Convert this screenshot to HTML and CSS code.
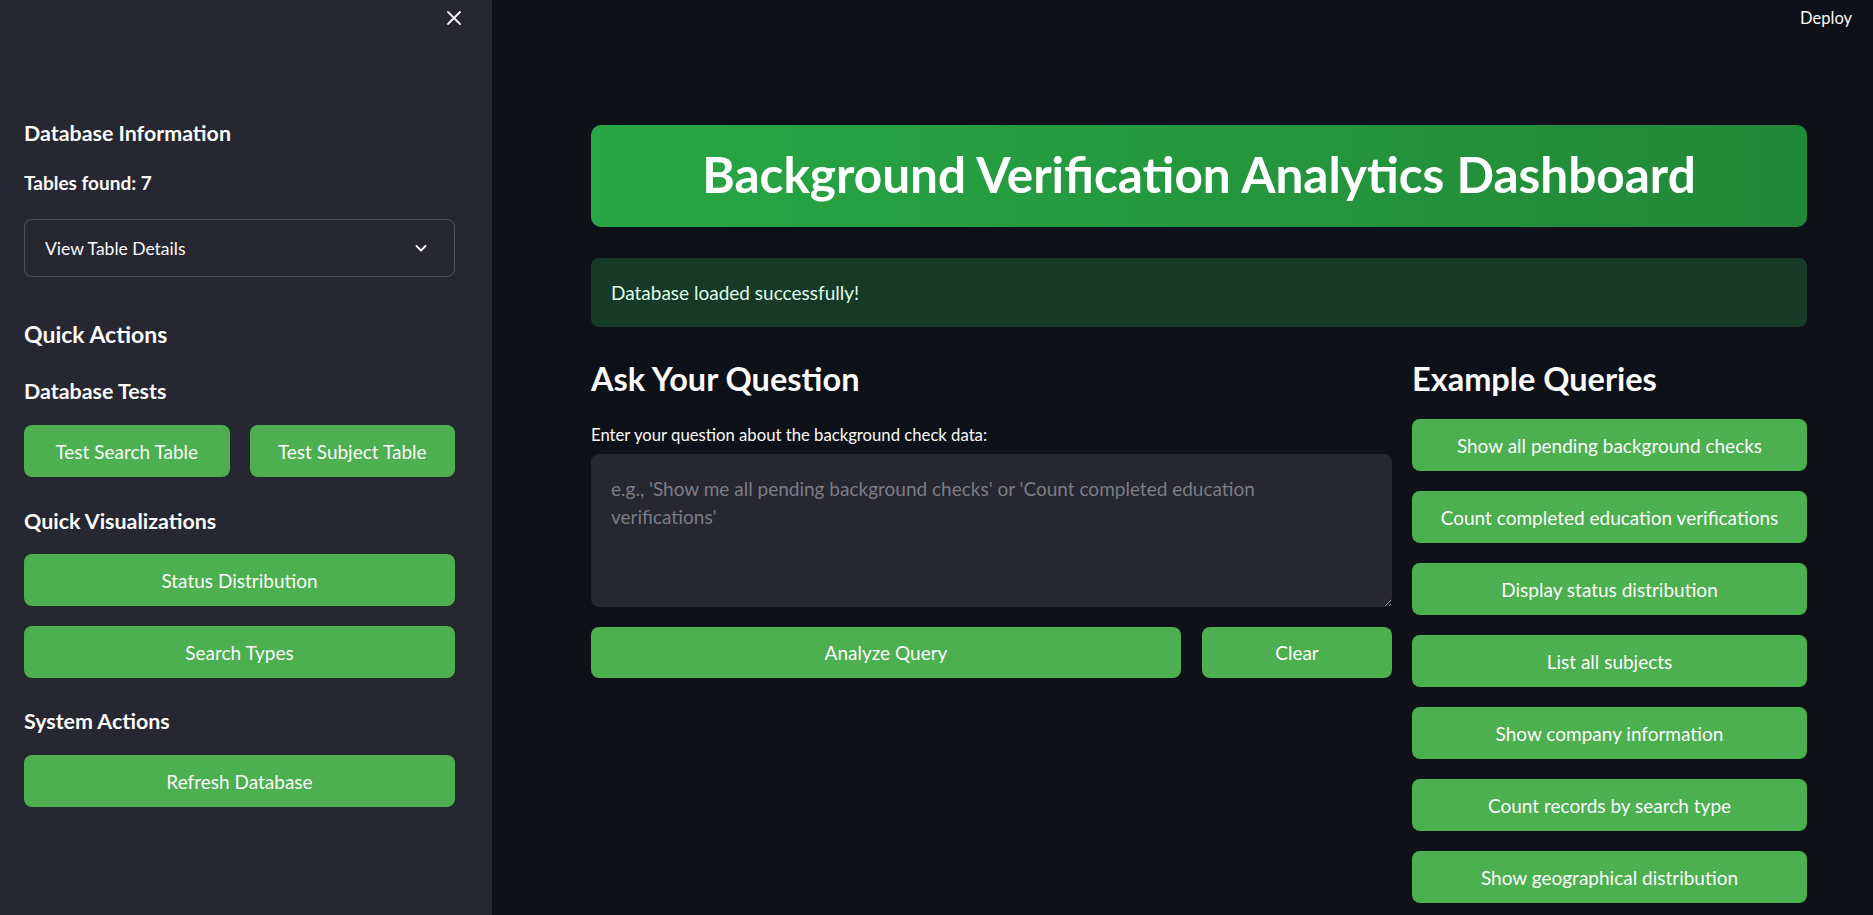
FILE: index.html
```html
<!DOCTYPE html>
<html lang="en">
<head>
<meta charset="utf-8">
<title>Background Verification Analytics Dashboard</title>
<link rel="stylesheet" href="styles.css">
</head>
<body>
<aside class="sidebar">
  <div class="sb-top">
    <svg class="close-icon" viewBox="0 0 16 16" width="16" height="16"><path d="M2 2 L14 14 M14 2 L2 14" stroke="#fafafa" stroke-width="1.8" fill="none" stroke-linecap="round"/></svg>
  </div>
  <h3 class="sb-h3 db-info">Database Information</h3>
  <p class="tables-found">Tables found: 7</p>
  <div class="expander">
    <span>View Table Details</span>
    <svg viewBox="0 0 16 16" width="16" height="16"><path d="M3.5 6 L8 10.5 L12.5 6" stroke="#fafafa" stroke-width="1.8" fill="none" stroke-linecap="round" stroke-linejoin="round"/></svg>
  </div>
  <h2 class="sb-h2 quick-actions">Quick Actions</h2>
  <h3 class="sb-h3 db-tests">Database Tests</h3>
  <div class="btn-pair">
    <button class="btn">Test Search Table</button>
    <button class="btn">Test Subject Table</button>
  </div>
  <h3 class="sb-h3 quick-vis">Quick Visualizations</h3>
  <button class="btn full status-btn">Status Distribution</button>
  <button class="btn full search-btn">Search Types</button>
  <h3 class="sb-h3 sys-actions">System Actions</h3>
  <button class="btn full refresh-btn">Refresh Database</button>
</aside>
<main class="main">
  <header class="topbar"><span class="deploy">Deploy</span></header>
  <section class="content">
    <div class="banner"><h1>Background Verification Analytics Dashboard</h1></div>
    <div class="alert">Database loaded successfully!</div>
    <div class="cols">
      <div class="col-left">
        <h2 class="main-h2">Ask Your Question</h2>
        <label class="q-label" for="q">Enter your question about the background check data:</label>
        <textarea id="q" class="q-input" placeholder="e.g., 'Show me all pending background checks' or 'Count completed education verifications'"></textarea>
        <div class="action-row">
          <button class="btn">Analyze Query</button>
          <button class="btn">Clear</button>
        </div>
      </div>
      <div class="col-right">
        <h2 class="main-h2">Example Queries</h2>
        <div class="examples">
          <button class="btn">Show all pending background checks</button>
          <button class="btn">Count completed education verifications</button>
          <button class="btn">Display status distribution</button>
          <button class="btn">List all subjects</button>
          <button class="btn">Show company information</button>
          <button class="btn">Count records by search type</button>
          <button class="btn">Show geographical distribution</button>
        </div>
      </div>
    </div>
  </section>
</main>
</body>
</html>
```

FILE: styles.css
```css
* { box-sizing: border-box; }
html, body { margin: 0; padding: 0; }
body {
  display: flex;
  width: 1873px;
  height: 915px;
  overflow: hidden;
  background: #0e1117;
  color: #fafafa;
  font-family: Lato, "Noto Sans", sans-serif;
}
.sidebar {
  width: 492px;
  flex: none;
  height: 915px;
  background: #262730;
  padding: 0 37px 0 24px;
  display: flex;
  flex-direction: column;
}
.sb-top {
  height: 36px;
  display: flex;
  justify-content: flex-end;
  align-items: center;
  margin-right: -7px;
}
.close-icon { display: block; }
.sb-h3 {
  margin: 0;
  font-size: 21.4px;
  line-height: 28px;
  font-weight: 700;
}
.sb-h2 {
  margin: 0;
  font-size: 23px;
  line-height: 32px;
  font-weight: 700;
}
.db-info { margin-top: 83px; }
.tables-found {
  margin: 24px 0 0;
  font-size: 19px;
  line-height: 24px;
  font-weight: 700;
}
.expander {
  margin-top: 24px;
  height: 58px;
  border: 1px solid rgba(250, 250, 250, 0.2);
  border-radius: 8px;
  display: flex;
  align-items: center;
  justify-content: space-between;
  padding: 0 25px 0 20px;
  font-size: 17.5px;
}
.quick-actions { margin-top: 41px; }
.db-tests { margin-top: 27px; }
.btn {
  background: #4caf50;
  color: #fafafa;
  border: none;
  border-radius: 8px;
  height: 52px;
  font-family: inherit;
  font-size: 19px;
  padding: 0 10px;
  cursor: pointer;
  white-space: nowrap;
}
.btn-pair {
  margin-top: 20px;
  display: grid;
  grid-template-columns: 1fr 1fr;
  gap: 20px;
}
.quick-vis { margin-top: 30px; }
.full { width: 100%; }
.status-btn { margin-top: 19px; }
.search-btn { margin-top: 20px; }
.sys-actions { margin-top: 29px; }
.refresh-btn { margin-top: 20px; }

.main {
  flex: 1;
  min-width: 0;
  display: flex;
  flex-direction: column;
}
.topbar {
  height: 36px;
  display: flex;
  justify-content: flex-end;
  align-items: center;
  padding-right: 21px;
}
.deploy { font-size: 16.5px; }
.content {
  padding: 0 66px 0 99px;
}
.banner {
  margin-top: 89px;
  height: 102px;
  border-radius: 10px;
  background: linear-gradient(90deg, #28a745 0%, #218838 100%);
  display: flex;
  align-items: center;
  justify-content: center;
}
.banner h1 {
  margin: 0;
  font-size: 49.5px;
  line-height: 60px;
  font-weight: 700;
  color: #ffffff;
  position: relative;
  top: -2px;
}
.alert {
  margin-top: 31px;
  height: 69px;
  border-radius: 8px;
  background: #173928;
  color: #dffde9;
  display: flex;
  align-items: center;
  padding: 0 20px;
  font-size: 19px;
}
.cols {
  margin-top: 32px;
  display: grid;
  grid-template-columns: 801px 1fr;
  gap: 20px;
}
.main-h2 {
  margin: 0;
  font-size: 32.5px;
  line-height: 40px;
  font-weight: 700;
}
.col-left { display: flex; flex-direction: column; }
.q-label {
  margin-top: 26px;
  font-size: 16.7px;
  line-height: 20px;
}
.q-input {
  margin-top: 9px;
  height: 153px;
  width: 100%;
  background: #262730;
  border: none;
  border-radius: 8px;
  color: #fafafa;
  font-family: inherit;
  font-size: 19px;
  line-height: 28px;
  padding: 21px 70px 21px 20px;
  resize: vertical;
  outline: none;
}
.q-input::placeholder { color: #7c7d85; }
.action-row {
  margin-top: 20px;
  display: grid;
  grid-template-columns: 590px 1fr;
  gap: 21px;
}
.action-row .btn { height: 51px; }
.examples {
  margin-top: 20px;
  display: flex;
  flex-direction: column;
  gap: 20px;
}
.examples .btn { width: 100%; }
```
